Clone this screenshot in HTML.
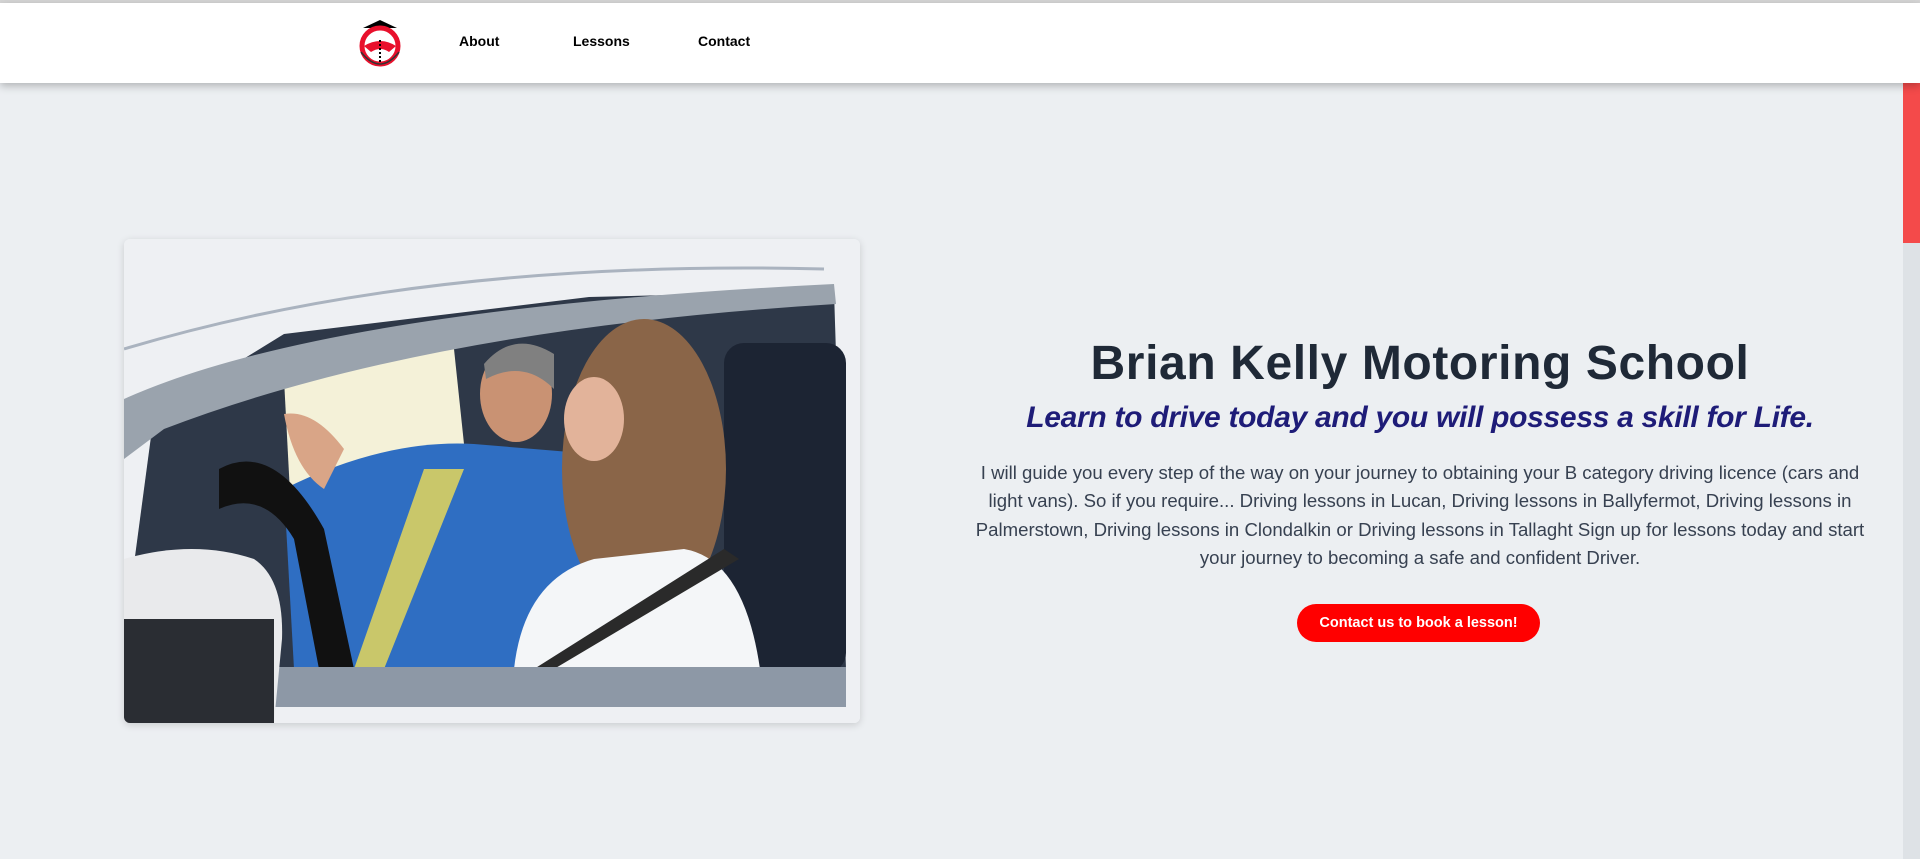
<!DOCTYPE html>
<html><head><meta charset="utf-8"><style>
*{margin:0;padding:0;box-sizing:border-box}
html,body{width:1920px;height:859px;overflow:hidden;background:#eceff2;font-family:"Liberation Sans",sans-serif}
.top{position:absolute;left:0;top:0;width:1920px;height:3px;background:#d6d6d6}
.nav{position:absolute;left:0;top:3px;width:1920px;height:80px;background:#fff;box-shadow:0 3px 8px rgba(0,0,0,.25);z-index:2}
.nav a{position:absolute;top:30px;font-size:14px;font-weight:bold;color:#000;text-decoration:none}
.sb{position:absolute;left:1903px;top:83px;width:17px;height:776px;background:#dee2e6}
.sb div{width:17px;height:160px;background:#f44a4a}
.photo{position:absolute;left:124px;top:239px;width:736px;height:484px;border-radius:6px;overflow:hidden;box-shadow:0 2px 8px rgba(0,0,0,.15)}
.txt{position:absolute;left:960px;width:920px;text-align:center}
h1{position:absolute;top:336px;font-size:48px;color:#1f2937;letter-spacing:.6px}
h2{position:absolute;top:401px;font-size:30px;font-style:italic;color:#1e1c78;letter-spacing:-.3px}
p{position:absolute;top:459px;font-size:18.6px;line-height:28.3px;color:#374151;white-space:nowrap;left:940px;width:960px}
.btn{position:absolute;left:1297px;top:604px;width:243px;height:38px;border-radius:19px;background:#ff0000;color:#fff;font-weight:bold;font-size:14.5px;text-align:center;line-height:38px}
</style></head><body>
<div class="top"></div>
<div class="nav">
<svg style="position:absolute;left:355px;top:13px" width="50" height="52" viewBox="0 0 50 52">
<polygon points="8,12 25,4 42,12" fill="#000"/>
<circle cx="25" cy="30" r="18" fill="none" stroke="#e8102c" stroke-width="5"/>
<path d="M9,30 Q25,20 41,30 L34,36 Q25,30 16,36Z" fill="#e8102c"/>
<path d="M25,24 V46" stroke="#000" stroke-width="2" stroke-dasharray="2,2"/>
<path d="M6,36 Q25,60 44,36" fill="none" stroke="#333" stroke-width="1.5"/>
</svg>
<a style="left:459px">About</a>
<a style="left:573px">Lessons</a>
<a style="left:698px">Contact</a>
</div>
<div class="sb"><div></div></div>
<div class="photo">
<svg width="736" height="484" viewBox="0 0 736 484">
<rect width="736" height="484" fill="#eef0f3"/>
<path d="M0,110 Q300,20 700,30" fill="none" stroke="#aab3bf" stroke-width="3"/>
<polygon points="30,175 160,95 465,58 710,52 722,430 150,440 0,400" fill="#2e3848"/>
<polygon points="160,140 330,110 350,300 170,330" fill="#f4f1d8"/>
<path d="M0,160 Q200,70 710,45 L712,65 Q300,90 40,190 L0,220Z" fill="#9aa3ad"/>
<rect x="600" y="104" width="122" height="330" rx="20" fill="#1c2433"/>
<path d="M160,250 Q260,200 350,205 L470,215 L480,430 L170,430Z" fill="#2f6ec2"/>
<path d="M300,230 L340,230 L260,430 L230,430Z" fill="#c9c76a"/>
<ellipse cx="392" cy="155" rx="36" ry="48" fill="#c99273"/>
<path d="M360,125 Q390,90 430,115 L430,150 Q400,120 362,140Z" fill="#808080"/>
<path d="M160,175 Q190,170 220,210 L200,250 Q170,230 160,175Z" fill="#d9a587"/>
<path d="M95,230 Q150,200 200,290 L230,430 L195,430 L170,300 Q140,250 95,270Z" fill="#111"/>
<ellipse cx="520" cy="230" rx="82" ry="150" fill="#8a6548"/>
<ellipse cx="470" cy="180" rx="30" ry="42" fill="#e2b39a"/>
<path d="M390,430 Q400,340 470,320 L560,310 Q620,320 636,430Z" fill="#f4f6f8"/>
<path d="M410,430 L600,310 L615,320 L430,430Z" fill="#2a2a2a"/>
<rect x="110" y="428" width="612" height="40" fill="#8d98a6"/>
<rect x="0" y="468" width="736" height="16" fill="#eef0f3"/>
<path d="M0,320 Q70,300 130,320 Q160,340 158,400 L150,484 L0,484Z" fill="#e9eaec"/>
<path d="M0,380 L150,380 L150,484 L0,484Z" fill="#2a2d33"/>
</svg>
</div>
<h1 class="txt">Brian Kelly Motoring School</h1>
<h2 class="txt">Learn to drive today and you will possess a skill for Life.</h2>
<p class="txt">I will guide you every step of the way on your journey to obtaining your B category driving licence (cars and<br>light vans). So if you require... Driving lessons in Lucan, Driving lessons in Ballyfermot, Driving lessons in<br>Palmerstown, Driving lessons in Clondalkin or Driving lessons in Tallaght Sign up for lessons today and start<br>your journey to becoming a safe and confident Driver.</p>
<div class="btn">Contact us to book a lesson!</div>
</body></html>
